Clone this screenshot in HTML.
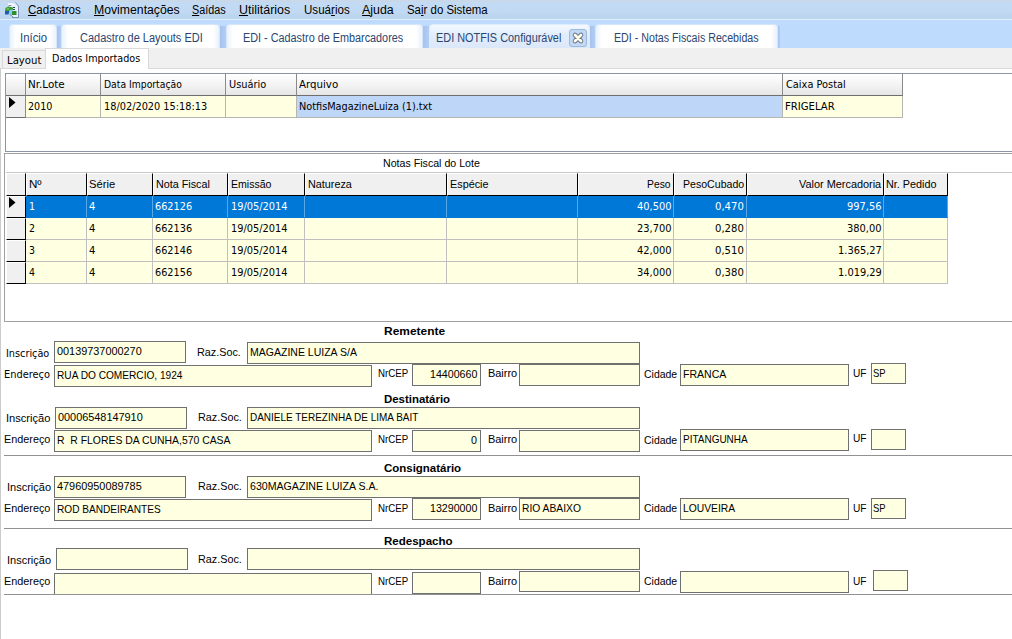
<!DOCTYPE html><html lang="pt-BR"><head><meta charset="utf-8"><title>EDI NOTFIS Configurável</title><style>

html,body{margin:0;padding:0;}
body{width:1012px;height:639px;overflow:hidden;position:relative;background:#fff;}
.t{position:absolute;white-space:pre;line-height:16px;display:block;transform-origin:0 50%;}
.t.r{transform-origin:100% 50%;}
.segoe{font-family:"Liberation Sans","DejaVu Sans",sans-serif;font-size:12px;}
.tahoma{font-family:"DejaVu Sans","Liberation Sans",sans-serif;font-size:11px;}
.arial{font-family:"Liberation Sans","DejaVu Sans",sans-serif;font-size:11px;}
.arialb{font-family:"Liberation Sans","DejaVu Sans",sans-serif;font-size:11px;font-weight:700;}
.b{position:absolute;box-sizing:border-box;}
u{text-decoration:underline;text-underline-offset:1px;}
.menubar{left:0;top:0;width:1012px;height:19px;background:linear-gradient(#cad8e8 0,#c9d8e8 1.5px,#c3daf4 2.5px,#c2d9f3 13px,#bdd6f0 14.5px,#bcd5ef 19px);}
.menuline{left:0;top:19px;width:1012px;height:1px;background:#e0f1fd;}
.tabstrip{left:0;top:20px;width:1012px;height:28px;background:#bedafc;}
.tab{top:24px;height:24px;border-radius:4px 4px 0 0;background:linear-gradient(90deg,#e9f2fd 0,#ffffff 6px,#ffffff calc(100% - 6px),#e9f2fd 100%);border:1px solid #d5e6fb;border-bottom:none;}
.tab.act{background:linear-gradient(#f4f9ff,#e3eefc 40%,#dbe8fa);border-color:#dcebfd;}
.closeb{left:569px;top:29px;width:18px;height:18px;border:1px solid #9db9dc;border-radius:3px;background:#c3d8f3;}
.graybar{left:0;top:48px;width:1012px;height:21px;background:#f0f0f0;}
.itab{border:1px solid #d9d9d9;background:#f0f0f0;}
.itab.act{background:#fff;border-bottom:none;}
.page{left:0;top:68px;width:1014px;height:573px;background:#fff;border:1px solid #dadada;border-left:1px solid #cbcbcb;}
.inp{background:#ffffe1;border:1px solid #707070;}
.hline{height:1px;background:#929292;}
.g1{background:#fff;border:1px solid #8b96a5;}
.h1{background:linear-gradient(#ffffff,#f4f4f4 50%,#e6e6e6);border-right:1px solid #8a8a8a;border-bottom:1px solid #6e6e6e;}
.c1{background:#ffffe1;border-right:1px solid #b6b6b0;border-bottom:1px solid #b6b6b0;}
.h2{background:#f0f0f0;border-right:1px solid #000;border-bottom:1px solid #000;border-top:1px solid #fff;border-left:1px solid #fff;}
.c2{background:#ffffe1;border-right:1px solid #c0c0c0;border-bottom:1px solid #c0c0c0;}
.c2.sel{background:#0078d7;border-color:#0078d7;border-right-color:#5aa8e8;}

</style></head><body>
<header class="chrome">
<div class="b menubar"></div><div class="b menuline"></div><div class="b tabstrip"></div>
<svg class="b" style="left:0px;top:0px" width="24" height="20" viewBox="0 0 24 20">
<path d="M8.500 3.500h7l3 3v11h-7" fill="#e6effb" stroke="none"/>
<path d="M15.500 2.500l3 3.500v11.500h-6.500" fill="none" stroke="#7d92b6" stroke-width="1"/>
<path d="M8 3.500h6v2h-6z" fill="#f6faff"/>
<path d="M8.500 5.500h3" stroke="#8a8fb0" stroke-width="1"/>
<path d="M13 7.500h2M13 9.500h2" stroke="#2c3a55" stroke-width="1"/>
<path d="M5.500 8l3-1.500 4.500 1v2.500l-3.500 1.500h-4.500z" fill="#3c9a30"/>
<path d="M6.500 8.500l2-.5 1 1-2 1z" fill="#7ed06c"/>
<path d="M5 11h5v2l-1.500 1.500h-3.500z" fill="#1d5cab"/>
<path d="M9.500 10l3.500-.5v3l-2.500 2h-2z" fill="#86cfe2"/>
<path d="M12.500 11h4v4h-5z" fill="#2f8a2a"/>
<path d="M10 14.500l3 2.500" stroke="#6c86ad" stroke-width="1"/>
</svg>
</header>
<nav class="menu" aria-label="Menu principal">
<span class="t segoe" style="top:1.84px;color:#000;left:27.90px;transform:scaleX(0.9634);"><u>C</u>adastros</span>
<span class="t segoe" style="top:1.84px;color:#000;left:93.90px;transform:scaleX(1.0197);"><u>M</u>ovimentações</span>
<span class="t segoe" style="top:1.84px;color:#000;left:192.40px;transform:scaleX(0.9017);"><u>S</u>aídas</span>
<span class="t segoe" style="top:1.84px;color:#000;left:239.40px;transform:scaleX(1.0373);"><u>U</u>tilitários</span>
<span class="t segoe" style="top:1.84px;color:#000;left:303.70px;transform:scaleX(0.9650);">Usuá<u>r</u>ios</span>
<span class="t segoe" style="top:1.84px;color:#000;left:362.40px;transform:scaleX(1.0325);"><u>A</u>juda</span>
<span class="t segoe" style="top:1.84px;color:#000;left:407.40px;transform:scaleX(0.9526);">Sa<u>i</u>r do Sistema</span>
</nav>
<nav class="tabs" aria-label="Janelas">
<div class="b" style="left:57px;top:26px;width:4px;height:22px;background:linear-gradient(90deg,#a5c3ee,#b3cef5)"></div>
<div class="b" style="left:220px;top:26px;width:6px;height:22px;background:linear-gradient(90deg,#a5c3ee,#b3cef5)"></div>
<div class="b" style="left:423px;top:26px;width:6px;height:22px;background:linear-gradient(90deg,#a5c3ee,#b3cef5)"></div>
<div class="b" style="left:590px;top:26px;width:5px;height:22px;background:linear-gradient(90deg,#a5c3ee,#b3cef5)"></div>
<div class="b" style="left:778px;top:26px;width:2px;height:22px;background:linear-gradient(90deg,#a5c3ee,#b3cef5)"></div>
<div class="b tab" style="left:9px;width:48px"></div>
<div class="b tab" style="left:61px;width:159px"></div>
<div class="b tab" style="left:226px;width:197px"></div>
<div class="b tab act" style="left:429px;width:161px"></div>
<div class="b tab" style="left:595px;width:183px"></div>
<div class="b closeb"></div>
<svg class="b" style="left:571px;top:31px" width="14" height="14" viewBox="0 0 14 14">
<path d="M4 4L10 10M10 4L4 10" stroke="#66758f" stroke-width="4.600" stroke-linecap="round"/>
<path d="M4 4L10 10M10 4L4 10" stroke="#fffde8" stroke-width="2.800" stroke-linecap="round"/>
</svg>
<span class="t segoe" style="top:29.84px;color:#2a4670;left:20.40px;transform:scaleX(0.9481);">Início</span>
<span class="t segoe" style="top:29.84px;color:#2a4670;left:79.90px;transform:scaleX(0.9151);">Cadastro de Layouts EDI</span>
<span class="t segoe" style="top:29.84px;color:#2a4670;left:243.40px;transform:scaleX(0.9029);">EDI - Cadastro de Embarcadores</span>
<span class="t segoe" style="top:29.84px;color:#2a4670;left:435.80px;transform:scaleX(0.9077);">EDI NOTFIS Configurável</span>
<span class="t segoe" style="top:29.84px;color:#2a4670;left:614.00px;transform:scaleX(0.8886);">EDI - Notas Fiscais Recebidas</span>
</nav>
<section class="pagecontrol">
<div class="b graybar"></div>
<div class="b page"></div>
<div class="b itab" style="left:2px;top:50px;width:44px;height:19px"></div>
<div class="b itab act" style="left:45px;top:48px;width:104px;height:21px"></div>
<span class="t tahoma" style="top:53.19px;color:#000;left:7.00px;transform:scaleX(0.9196);">Layout</span>
<span class="t tahoma" style="top:50.69px;color:#000;left:52.40px;transform:scaleX(0.8746);">Dados Importados</span>
</section>
<section class="grid-lotes">
<div class="b g1" style="left:5px;top:73px;width:1010px;height:79px"></div>
<div class="b h1" style="left:6px;top:74px;width:20px;height:22px"></div>
<div class="b h1" style="left:6px;top:96px;width:20px;height:22px;background:#f0f0f0;"></div>
<div class="b h1" style="left:26px;top:74px;width:75px;height:22px"></div>
<div class="b c1" style="left:26px;top:96px;width:75px;height:22px;"></div>
<div class="b h1" style="left:101px;top:74px;width:125px;height:22px"></div>
<div class="b c1" style="left:101px;top:96px;width:125px;height:22px;"></div>
<div class="b h1" style="left:226px;top:74px;width:71px;height:22px"></div>
<div class="b c1" style="left:226px;top:96px;width:71px;height:22px;"></div>
<div class="b h1" style="left:297px;top:74px;width:486px;height:22px"></div>
<div class="b c1" style="left:297px;top:96px;width:486px;height:22px;background:#bed6f7;"></div>
<div class="b h1" style="left:783px;top:74px;width:120px;height:22px"></div>
<div class="b c1" style="left:783px;top:96px;width:120px;height:22px;"></div>
<svg class="b" style="left:9px;top:97px" width="7" height="12"><path d="M0 0L6.500 5.500L0 11z" fill="#000"/></svg>
<span class="t tahoma" style="top:77.19px;color:#000;left:27.90px;transform:scaleX(0.9414);">Nr.Lote</span>
<span class="t tahoma" style="top:77.19px;color:#000;left:104.20px;transform:scaleX(0.8408);">Data Importação</span>
<span class="t tahoma" style="top:77.19px;color:#000;left:228.90px;transform:scaleX(0.8897);">Usuário</span>
<span class="t tahoma" style="top:77.19px;color:#000;left:299.40px;transform:scaleX(0.9309);">Arquivo</span>
<span class="t tahoma" style="top:77.19px;color:#000;left:785.80px;transform:scaleX(0.8919);">Caixa Postal</span>
<span class="t tahoma" style="top:99.19px;color:#000;left:28.40px;transform:scaleX(0.8714);">2010</span>
<span class="t tahoma" style="top:99.19px;color:#000;left:104.20px;transform:scaleX(0.8873);">18/02/2020 15:18:13</span>
<span class="t tahoma" style="top:99.19px;color:#000;left:299.40px;transform:scaleX(0.8841);">NotfisMagazineLuiza (1).txt</span>
<span class="t tahoma" style="top:99.19px;color:#000;left:785.20px;transform:scaleX(0.9161);">FRIGELAR</span>
</section>
<section class="grid-notas">
<div class="b g1" style="left:4px;top:153px;width:1011px;height:169px;border-color:#a0a0a0"></div>
<div class="b" style="left:6px;top:172px;width:1006px;height:1px;background:#c8c8c8"></div>
<div class="b h2" style="left:6px;top:173px;width:20px;height:23px"></div>
<div class="b h2" style="left:6px;top:196px;width:20px;height:22px"></div>
<div class="b h2" style="left:6px;top:218px;width:20px;height:22px"></div>
<div class="b h2" style="left:6px;top:240px;width:20px;height:22px"></div>
<div class="b h2" style="left:6px;top:262px;width:20px;height:22px"></div>
<div class="b h2" style="left:26px;top:173px;width:61px;height:23px"></div>
<div class="b c2 sel" style="left:26px;top:196px;width:61px;height:22px"></div>
<div class="b c2" style="left:26px;top:218px;width:61px;height:22px"></div>
<div class="b c2" style="left:26px;top:240px;width:61px;height:22px"></div>
<div class="b c2" style="left:26px;top:262px;width:61px;height:22px"></div>
<div class="b h2" style="left:87px;top:173px;width:66px;height:23px"></div>
<div class="b c2 sel" style="left:87px;top:196px;width:66px;height:22px"></div>
<div class="b c2" style="left:87px;top:218px;width:66px;height:22px"></div>
<div class="b c2" style="left:87px;top:240px;width:66px;height:22px"></div>
<div class="b c2" style="left:87px;top:262px;width:66px;height:22px"></div>
<div class="b h2" style="left:153px;top:173px;width:75px;height:23px"></div>
<div class="b c2 sel" style="left:153px;top:196px;width:75px;height:22px"></div>
<div class="b c2" style="left:153px;top:218px;width:75px;height:22px"></div>
<div class="b c2" style="left:153px;top:240px;width:75px;height:22px"></div>
<div class="b c2" style="left:153px;top:262px;width:75px;height:22px"></div>
<div class="b h2" style="left:228px;top:173px;width:77px;height:23px"></div>
<div class="b c2 sel" style="left:228px;top:196px;width:77px;height:22px"></div>
<div class="b c2" style="left:228px;top:218px;width:77px;height:22px"></div>
<div class="b c2" style="left:228px;top:240px;width:77px;height:22px"></div>
<div class="b c2" style="left:228px;top:262px;width:77px;height:22px"></div>
<div class="b h2" style="left:305px;top:173px;width:142px;height:23px"></div>
<div class="b c2 sel" style="left:305px;top:196px;width:142px;height:22px"></div>
<div class="b c2" style="left:305px;top:218px;width:142px;height:22px"></div>
<div class="b c2" style="left:305px;top:240px;width:142px;height:22px"></div>
<div class="b c2" style="left:305px;top:262px;width:142px;height:22px"></div>
<div class="b h2" style="left:447px;top:173px;width:131px;height:23px"></div>
<div class="b c2 sel" style="left:447px;top:196px;width:131px;height:22px"></div>
<div class="b c2" style="left:447px;top:218px;width:131px;height:22px"></div>
<div class="b c2" style="left:447px;top:240px;width:131px;height:22px"></div>
<div class="b c2" style="left:447px;top:262px;width:131px;height:22px"></div>
<div class="b h2" style="left:578px;top:173px;width:96px;height:23px"></div>
<div class="b c2 sel" style="left:578px;top:196px;width:96px;height:22px"></div>
<div class="b c2" style="left:578px;top:218px;width:96px;height:22px"></div>
<div class="b c2" style="left:578px;top:240px;width:96px;height:22px"></div>
<div class="b c2" style="left:578px;top:262px;width:96px;height:22px"></div>
<div class="b h2" style="left:674px;top:173px;width:73px;height:23px"></div>
<div class="b c2 sel" style="left:674px;top:196px;width:73px;height:22px"></div>
<div class="b c2" style="left:674px;top:218px;width:73px;height:22px"></div>
<div class="b c2" style="left:674px;top:240px;width:73px;height:22px"></div>
<div class="b c2" style="left:674px;top:262px;width:73px;height:22px"></div>
<div class="b h2" style="left:747px;top:173px;width:137px;height:23px"></div>
<div class="b c2 sel" style="left:747px;top:196px;width:137px;height:22px"></div>
<div class="b c2" style="left:747px;top:218px;width:137px;height:22px"></div>
<div class="b c2" style="left:747px;top:240px;width:137px;height:22px"></div>
<div class="b c2" style="left:747px;top:262px;width:137px;height:22px"></div>
<div class="b h2" style="left:884px;top:173px;width:64px;height:23px"></div>
<div class="b c2 sel" style="left:884px;top:196px;width:64px;height:22px"></div>
<div class="b c2" style="left:884px;top:218px;width:64px;height:22px"></div>
<div class="b c2" style="left:884px;top:240px;width:64px;height:22px"></div>
<div class="b c2" style="left:884px;top:262px;width:64px;height:22px"></div>
<svg class="b" style="left:9px;top:197px" width="7" height="12"><path d="M0 0L6.500 5.500L0 11z" fill="#000"/></svg>
<span class="t arial" style="top:155.19px;color:#000;left:382.70px;transform:scaleX(0.9663);">Notas Fiscal do Lote</span>
<span class="t arial" style="top:176.19px;color:#000;left:29.00px;transform:scaleX(1.0527);">Nº</span>
<span class="t arial" style="top:176.19px;color:#000;left:89.40px;transform:scaleX(1.0200);">Série</span>
<span class="t arial" style="top:176.19px;color:#000;left:155.70px;transform:scaleX(0.9794);">Nota Fiscal</span>
<span class="t arial" style="top:176.19px;color:#000;left:230.60px;transform:scaleX(0.9600);">Emissão</span>
<span class="t arial" style="top:176.19px;color:#000;left:307.80px;transform:scaleX(0.9812);">Natureza</span>
<span class="t arial" style="top:176.19px;color:#000;left:449.60px;transform:scaleX(0.9836);">Espécie</span>
<span class="t arial" style="top:176.19px;color:#000;left:647.40px;transform:scaleX(0.9411);">Peso</span>
<span class="t arial" style="top:176.19px;color:#000;left:683.40px;transform:scaleX(0.9621);">PesoCubado</span>
<span class="t arial" style="top:176.19px;color:#000;left:798.90px;transform:scaleX(0.9909);">Valor Mercadoria</span>
<span class="t arial" style="top:176.19px;color:#000;left:886.10px;transform:scaleX(0.9830);">Nr. Pedido</span>
<span class="t tahoma" style="top:199.19px;color:#fff;left:29.20px;transform:scaleX(0.8571);">1</span>
<span class="t tahoma" style="top:199.19px;color:#fff;left:89.40px;transform:scaleX(0.9143);">4</span>
<span class="t tahoma" style="top:199.19px;color:#fff;left:155.00px;transform:scaleX(0.8833);">662126</span>
<span class="t tahoma" style="top:199.19px;color:#fff;left:230.60px;transform:scaleX(0.8927);">19/05/2014</span>
<span class="t tahoma" style="top:199.19px;color:#fff;left:636.80px;transform:scaleX(0.8987);">40,500</span>
<span class="t tahoma" style="top:199.19px;color:#fff;left:715.40px;transform:scaleX(0.9143);">0,470</span>
<span class="t tahoma" style="top:199.19px;color:#fff;left:846.80px;transform:scaleX(0.8987);">997,56</span>
<span class="t tahoma" style="top:221.19px;color:#000;left:29.20px;transform:scaleX(0.8571);">2</span>
<span class="t tahoma" style="top:221.19px;color:#000;left:89.40px;transform:scaleX(0.9143);">4</span>
<span class="t tahoma" style="top:221.19px;color:#000;left:155.00px;transform:scaleX(0.8833);">662136</span>
<span class="t tahoma" style="top:221.19px;color:#000;left:230.60px;transform:scaleX(0.8927);">19/05/2014</span>
<span class="t tahoma" style="top:221.19px;color:#000;left:636.80px;transform:scaleX(0.8987);">23,700</span>
<span class="t tahoma" style="top:221.19px;color:#000;left:715.40px;transform:scaleX(0.9143);">0,280</span>
<span class="t tahoma" style="top:221.19px;color:#000;left:846.80px;transform:scaleX(0.8987);">380,00</span>
<span class="t tahoma" style="top:243.19px;color:#000;left:29.20px;transform:scaleX(0.8571);">3</span>
<span class="t tahoma" style="top:243.19px;color:#000;left:89.40px;transform:scaleX(0.9143);">4</span>
<span class="t tahoma" style="top:243.19px;color:#000;left:155.00px;transform:scaleX(0.8833);">662146</span>
<span class="t tahoma" style="top:243.19px;color:#000;left:230.60px;transform:scaleX(0.8927);">19/05/2014</span>
<span class="t tahoma" style="top:243.19px;color:#000;left:636.80px;transform:scaleX(0.8987);">42,000</span>
<span class="t tahoma" style="top:243.19px;color:#000;left:715.40px;transform:scaleX(0.9143);">0,510</span>
<span class="t tahoma" style="top:243.19px;color:#000;left:837.60px;transform:scaleX(0.8942);">1.365,27</span>
<span class="t tahoma" style="top:265.19px;color:#000;left:29.20px;transform:scaleX(0.8571);">4</span>
<span class="t tahoma" style="top:265.19px;color:#000;left:89.40px;transform:scaleX(0.9143);">4</span>
<span class="t tahoma" style="top:265.19px;color:#000;left:155.00px;transform:scaleX(0.8833);">662156</span>
<span class="t tahoma" style="top:265.19px;color:#000;left:230.60px;transform:scaleX(0.8927);">19/05/2014</span>
<span class="t tahoma" style="top:265.19px;color:#000;left:636.80px;transform:scaleX(0.8987);">34,000</span>
<span class="t tahoma" style="top:265.19px;color:#000;left:715.40px;transform:scaleX(0.9143);">0,380</span>
<span class="t tahoma" style="top:265.19px;color:#000;left:837.60px;transform:scaleX(0.8942);">1.019,29</span>
</section>
<section class="form-sec">
<div class="b inp" style="left:54px;top:341px;width:132px;height:22px"></div>
<div class="b inp" style="left:247px;top:342px;width:393px;height:22px"></div>
<div class="b inp" style="left:54px;top:365px;width:318px;height:22px"></div>
<div class="b inp" style="left:412px;top:364px;width:69px;height:22px"></div>
<div class="b inp" style="left:519px;top:364px;width:121px;height:22px"></div>
<div class="b inp" style="left:680px;top:364px;width:169px;height:22px"></div>
<div class="b inp" style="left:871px;top:363px;width:35px;height:21px"></div>
<span class="t arialb" style="top:322.99px;color:#000;left:384.00px;transform:scaleX(1.0862);">Remetente</span>
<span class="t tahoma" style="top:346.19px;color:#000;left:6.10px;transform:scaleX(0.8820);">Inscrição</span>
<span class="t tahoma" style="top:367.19px;color:#000;left:3.80px;transform:scaleX(0.8932);">Endereço</span>
<span class="t arial" style="top:344.19px;color:#000;left:196.60px;transform:scaleX(0.9812);">Raz.Soc.</span>
<span class="t arial" style="top:365.19px;color:#000;left:378.10px;transform:scaleX(0.8822);">NrCEP</span>
<span class="t arial" style="top:365.19px;color:#000;left:487.90px;">Bairro</span>
<span class="t arial" style="top:366.19px;color:#000;left:644.00px;transform:scaleX(0.9524);">Cidade</span>
<span class="t arial" style="top:365.19px;color:#000;left:853.10px;transform:scaleX(0.9201);">UF</span>
<span class="t arial" style="top:343.19px;color:#000;left:56.90px;transform:scaleX(0.9888);">00139737000270</span>
<span class="t arial" style="top:344.19px;color:#000;left:249.70px;transform:scaleX(0.9557);">MAGAZINE LUIZA S/A</span>
<span class="t arial" style="top:367.19px;color:#000;left:56.90px;transform:scaleX(0.9206);">RUA DO COMERCIO, 1924</span>
<span class="t arial" style="top:366.19px;color:#000;left:429.70px;transform:scaleX(0.9683);">14400660</span>
<span class="t arial" style="top:366.19px;color:#000;left:682.90px;transform:scaleX(0.9594);">FRANCA</span>
<span class="t arial" style="top:365.19px;color:#000;left:873.20px;transform:scaleX(0.8579);">SP</span>
</section>
<section class="form-sec">
<div class="b inp" style="left:55px;top:407px;width:132px;height:22px"></div>
<div class="b inp" style="left:247px;top:407px;width:393px;height:22px"></div>
<div class="b inp" style="left:54px;top:430px;width:318px;height:22px"></div>
<div class="b inp" style="left:412px;top:430px;width:69px;height:22px"></div>
<div class="b inp" style="left:519px;top:430px;width:121px;height:22px"></div>
<div class="b inp" style="left:680px;top:429px;width:169px;height:22px"></div>
<div class="b inp" style="left:871px;top:429px;width:35px;height:21px"></div>
<div class="b hline" style="left:4px;top:455px;width:1008px"></div>
<span class="t arialb" style="top:390.69px;color:#000;left:384.00px;transform:scaleX(1.0397);">Destinatário</span>
<span class="t arial" style="top:410.19px;color:#000;left:5.70px;transform:scaleX(1.0084);">Inscrição</span>
<span class="t arial" style="top:431.19px;color:#000;left:3.70px;transform:scaleX(0.9853);">Endereço</span>
<span class="t arial" style="top:409.19px;color:#000;left:198.20px;transform:scaleX(0.9812);">Raz.Soc.</span>
<span class="t arial" style="top:431.19px;color:#000;left:378.10px;transform:scaleX(0.8822);">NrCEP</span>
<span class="t arial" style="top:431.19px;color:#000;left:487.90px;">Bairro</span>
<span class="t arial" style="top:432.19px;color:#000;left:644.00px;transform:scaleX(0.9524);">Cidade</span>
<span class="t arial" style="top:430.19px;color:#000;left:853.10px;transform:scaleX(0.9201);">UF</span>
<span class="t arial" style="top:409.19px;color:#000;left:57.90px;transform:scaleX(0.9888);">00006548147910</span>
<span class="t arial" style="top:409.19px;color:#000;left:249.70px;transform:scaleX(0.9067);">DANIELE TEREZINHA DE LIMA BAIT</span>
<span class="t arial" style="top:432.19px;color:#000;left:56.90px;transform:scaleX(0.9461);">R  R FLORES DA CUNHA,570 CASA</span>
<span class="t arial" style="top:432.19px;color:#000;left:471.10px;transform:scaleX(0.9796);">0</span>
<span class="t arial" style="top:431.19px;color:#000;left:682.90px;transform:scaleX(0.9073);">PITANGUNHA</span>
</section>
<section class="form-sec">
<div class="b inp" style="left:54px;top:476px;width:132px;height:22px"></div>
<div class="b inp" style="left:247px;top:476px;width:393px;height:22px"></div>
<div class="b inp" style="left:54px;top:499px;width:318px;height:22px"></div>
<div class="b inp" style="left:412px;top:498px;width:69px;height:22px"></div>
<div class="b inp" style="left:519px;top:498px;width:121px;height:22px"></div>
<div class="b inp" style="left:680px;top:498px;width:169px;height:22px"></div>
<div class="b inp" style="left:871px;top:498px;width:35px;height:21px"></div>
<div class="b hline" style="left:4px;top:528px;width:1008px"></div>
<span class="t arialb" style="top:459.99px;color:#000;left:384.00px;transform:scaleX(1.0426);">Consignatário</span>
<span class="t arial" style="top:479.19px;color:#000;left:7.00px;">Inscrição</span>
<span class="t arial" style="top:500.19px;color:#000;left:3.70px;transform:scaleX(0.9853);">Endereço</span>
<span class="t arial" style="top:478.19px;color:#000;left:197.90px;transform:scaleX(0.9812);">Raz.Soc.</span>
<span class="t arial" style="top:500.19px;color:#000;left:378.10px;transform:scaleX(0.8822);">NrCEP</span>
<span class="t arial" style="top:500.19px;color:#000;left:487.90px;">Bairro</span>
<span class="t arial" style="top:500.19px;color:#000;left:644.00px;transform:scaleX(0.9524);">Cidade</span>
<span class="t arial" style="top:500.19px;color:#000;left:853.10px;transform:scaleX(0.9201);">UF</span>
<span class="t arial" style="top:478.19px;color:#000;left:56.90px;transform:scaleX(0.9888);">47960950089785</span>
<span class="t arial" style="top:478.19px;color:#000;left:249.70px;transform:scaleX(0.9641);">630MAGAZINE LUIZA S.A.</span>
<span class="t arial" style="top:501.19px;color:#000;left:56.90px;transform:scaleX(0.9171);">ROD BANDEIRANTES</span>
<span class="t arial" style="top:500.19px;color:#000;left:429.70px;transform:scaleX(0.9683);">13290000</span>
<span class="t arial" style="top:500.19px;color:#000;left:521.70px;transform:scaleX(0.9354);">RIO ABAIXO</span>
<span class="t arial" style="top:500.19px;color:#000;left:682.90px;transform:scaleX(0.9382);">LOUVEIRA</span>
<span class="t arial" style="top:500.19px;color:#000;left:873.20px;transform:scaleX(0.8579);">SP</span>
</section>
<section class="form-sec">
<div class="b inp" style="left:56px;top:548px;width:132px;height:22px"></div>
<div class="b inp" style="left:247px;top:548px;width:393px;height:22px"></div>
<div class="b inp" style="left:54px;top:573px;width:318px;height:22px"></div>
<div class="b inp" style="left:412px;top:572px;width:69px;height:22px"></div>
<div class="b inp" style="left:519px;top:571px;width:121px;height:21px"></div>
<div class="b inp" style="left:680px;top:571px;width:169px;height:22px"></div>
<div class="b inp" style="left:873px;top:570px;width:35px;height:21px"></div>
<div class="b hline" style="left:4px;top:594px;width:1008px"></div>
<span class="t arialb" style="top:533.19px;color:#000;left:384.00px;transform:scaleX(1.0486);">Redespacho</span>
<span class="t arial" style="top:552.19px;color:#000;left:7.00px;">Inscrição</span>
<span class="t arial" style="top:573.19px;color:#000;left:3.70px;transform:scaleX(0.9853);">Endereço</span>
<span class="t arial" style="top:551.19px;color:#000;left:197.90px;transform:scaleX(0.9812);">Raz.Soc.</span>
<span class="t arial" style="top:573.19px;color:#000;left:378.10px;transform:scaleX(0.8822);">NrCEP</span>
<span class="t arial" style="top:573.19px;color:#000;left:487.90px;">Bairro</span>
<span class="t arial" style="top:573.19px;color:#000;left:644.00px;transform:scaleX(0.9524);">Cidade</span>
<span class="t arial" style="top:573.19px;color:#000;left:853.10px;transform:scaleX(0.9201);">UF</span>
</section>
</body></html>
